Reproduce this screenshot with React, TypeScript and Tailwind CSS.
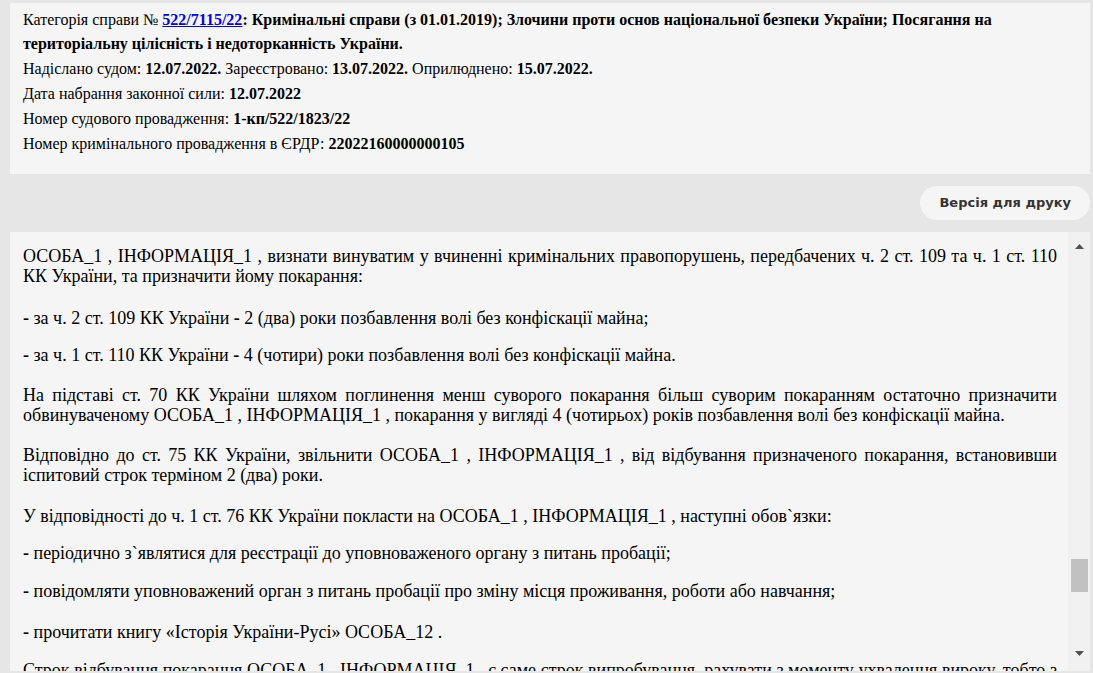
import React from 'react';

const serif = "font-['Liberation_Serif','Times_New_Roman',serif]";

const Meta: React.FC = () => {
  return (
    <section className={`ml-[10px] mr-[3px] mt-[3px] bg-[#f5f5f5] pl-[13px] pr-4 pt-[5px] pb-[18px] text-[16px] text-black ${serif}`}>
      <p className="leading-[24px]">
        Категорія справи №{' '}
        <a href="#" className="font-bold text-[#0000ee] underline">
          522/7115/22
        </a>
        <b>: Кримінальні справи (з 01.01.2019); Злочини проти основ національної безпеки України; Посягання на територіальну цілісність і недоторканність України.</b>
      </p>
      <p className="leading-[25px]">
        Надіслано судом: <b>12.07.2022.</b> Зареєстровано: <b>13.07.2022.</b> Оприлюднено: <b>15.07.2022.</b>
      </p>
      <p className="leading-[25px]">
        Дата набрання законної сили: <b>12.07.2022</b>
      </p>
      <p className="leading-[25px]">
        Номер судового провадження: <b>1-кп/522/1823/22</b>
      </p>
      <p className="leading-[25px]">
        Номер кримінального провадження в ЄРДР: <b>22022160000000105</b>
      </p>
    </section>
  );
};

const Scrollbar: React.FC = () => {
  return (
    <div className="flex w-[22px] shrink-0 flex-col items-center bg-[#f1f1f1]">
      <div className="flex h-[22px] w-full items-end justify-center pb-[5px]">
        <svg width="9" height="5" viewBox="0 0 9 5">
          <path d="M0 5 L4.5 0 L9 5 Z" fill="#505050" />
        </svg>
      </div>
      <div className="flex-1" />
      <div className="h-[33px] w-[17px] bg-[#c1c1c1]" />
      <div className="h-[57px]" />
      <div className="flex h-[22px] w-full items-start justify-center pt-[2px]">
        <svg width="9" height="5" viewBox="0 0 9 5">
          <path d="M0 0 L9 0 L4.5 5 Z" fill="#505050" />
        </svg>
      </div>
    </div>
  );
};

const Dash: React.FC = () => <b>-</b>;

const Verdict: React.FC = () => {
  return (
    <section className="ml-[10px] mr-[3px] mt-[12px] flex h-[439px] overflow-hidden bg-[#f5f5f5]">
      <div className={`flex-1 overflow-hidden pl-[13px] pr-[11px] pt-[14px] text-justify text-[18px] leading-[20px] text-black ${serif}`}>
        <p>
          ОСОБА_1 , ІНФОРМАЦІЯ_1 , визнати винуватим у вчиненні кримінальних правопорушень, передбачених ч. 2 ст. 109 та ч. 1 ст. 110 КК України, та призначити йому покарання:
        </p>
        <p className="mt-[22px]">
          <Dash /> за ч. 2 ст. 109 КК України <Dash /> 2 (два) роки позбавлення волі без конфіскації майна;
        </p>
        <p className="mt-[17px]">
          <Dash /> за ч. 1 ст. 110 КК України <Dash /> 4 (чотири) роки позбавлення волі без конфіскації майна.
        </p>
        <p className="mt-[20px]">
          На підставі ст. 70 КК України шляхом поглинення менш суворого покарання більш суворим покаранням остаточно призначити обвинуваченому ОСОБА_1 , ІНФОРМАЦІЯ_1 , покарання у вигляді 4 (чотирьох) років позбавлення волі без конфіскації майна.
        </p>
        <p className="mt-[20px]">
          Відповідно до ст. 75 КК України, звільнити ОСОБА_1 , ІНФОРМАЦІЯ_1 , від відбування призначеного покарання, встановивши іспитовий строк терміном 2 (два) роки.
        </p>
        <p className="mt-[21px]">
          У відповідності до ч. 1 ст. 76 КК України покласти на ОСОБА_1 , ІНФОРМАЦІЯ_1 , наступні обов`язки:
        </p>
        <p className="mt-[17px]">
          <Dash /> періодично з`являтися для реєстрації до уповноваженого органу з питань пробації;
        </p>
        <p className="mt-[18px]">
          <Dash /> повідомляти уповноважений орган з питань пробації про зміну місця проживання, роботи або навчання;
        </p>
        <p className="mt-[21px]">
          <Dash /> прочитати книгу «Історія України-Русі» ОСОБА_12 .
        </p>
        <p className="mt-[18px]">
          Строк відбування покарання ОСОБА_1 , ІНФОРМАЦІЯ_1 , є саме строк випробування, рахувати з моменту ухвалення вироку, тобто з 12.07.2022 року.
        </p>
      </div>
      <Scrollbar />
    </section>
  );
};

export default function App() {
  return (
    <div className="min-h-[673px] overflow-hidden bg-[#e6e6e6]">
      <Meta />
      <div className="mr-[3px] mt-[12px] flex justify-end">
        <button className="h-[34px] rounded-full bg-[#f5f5f5] px-[19px] font-['DejaVu_Sans',Verdana,sans-serif] text-[13px] font-bold text-[#333333]">
          Версія для друку
        </button>
      </div>
      <Verdict />
    </div>
  );
}
